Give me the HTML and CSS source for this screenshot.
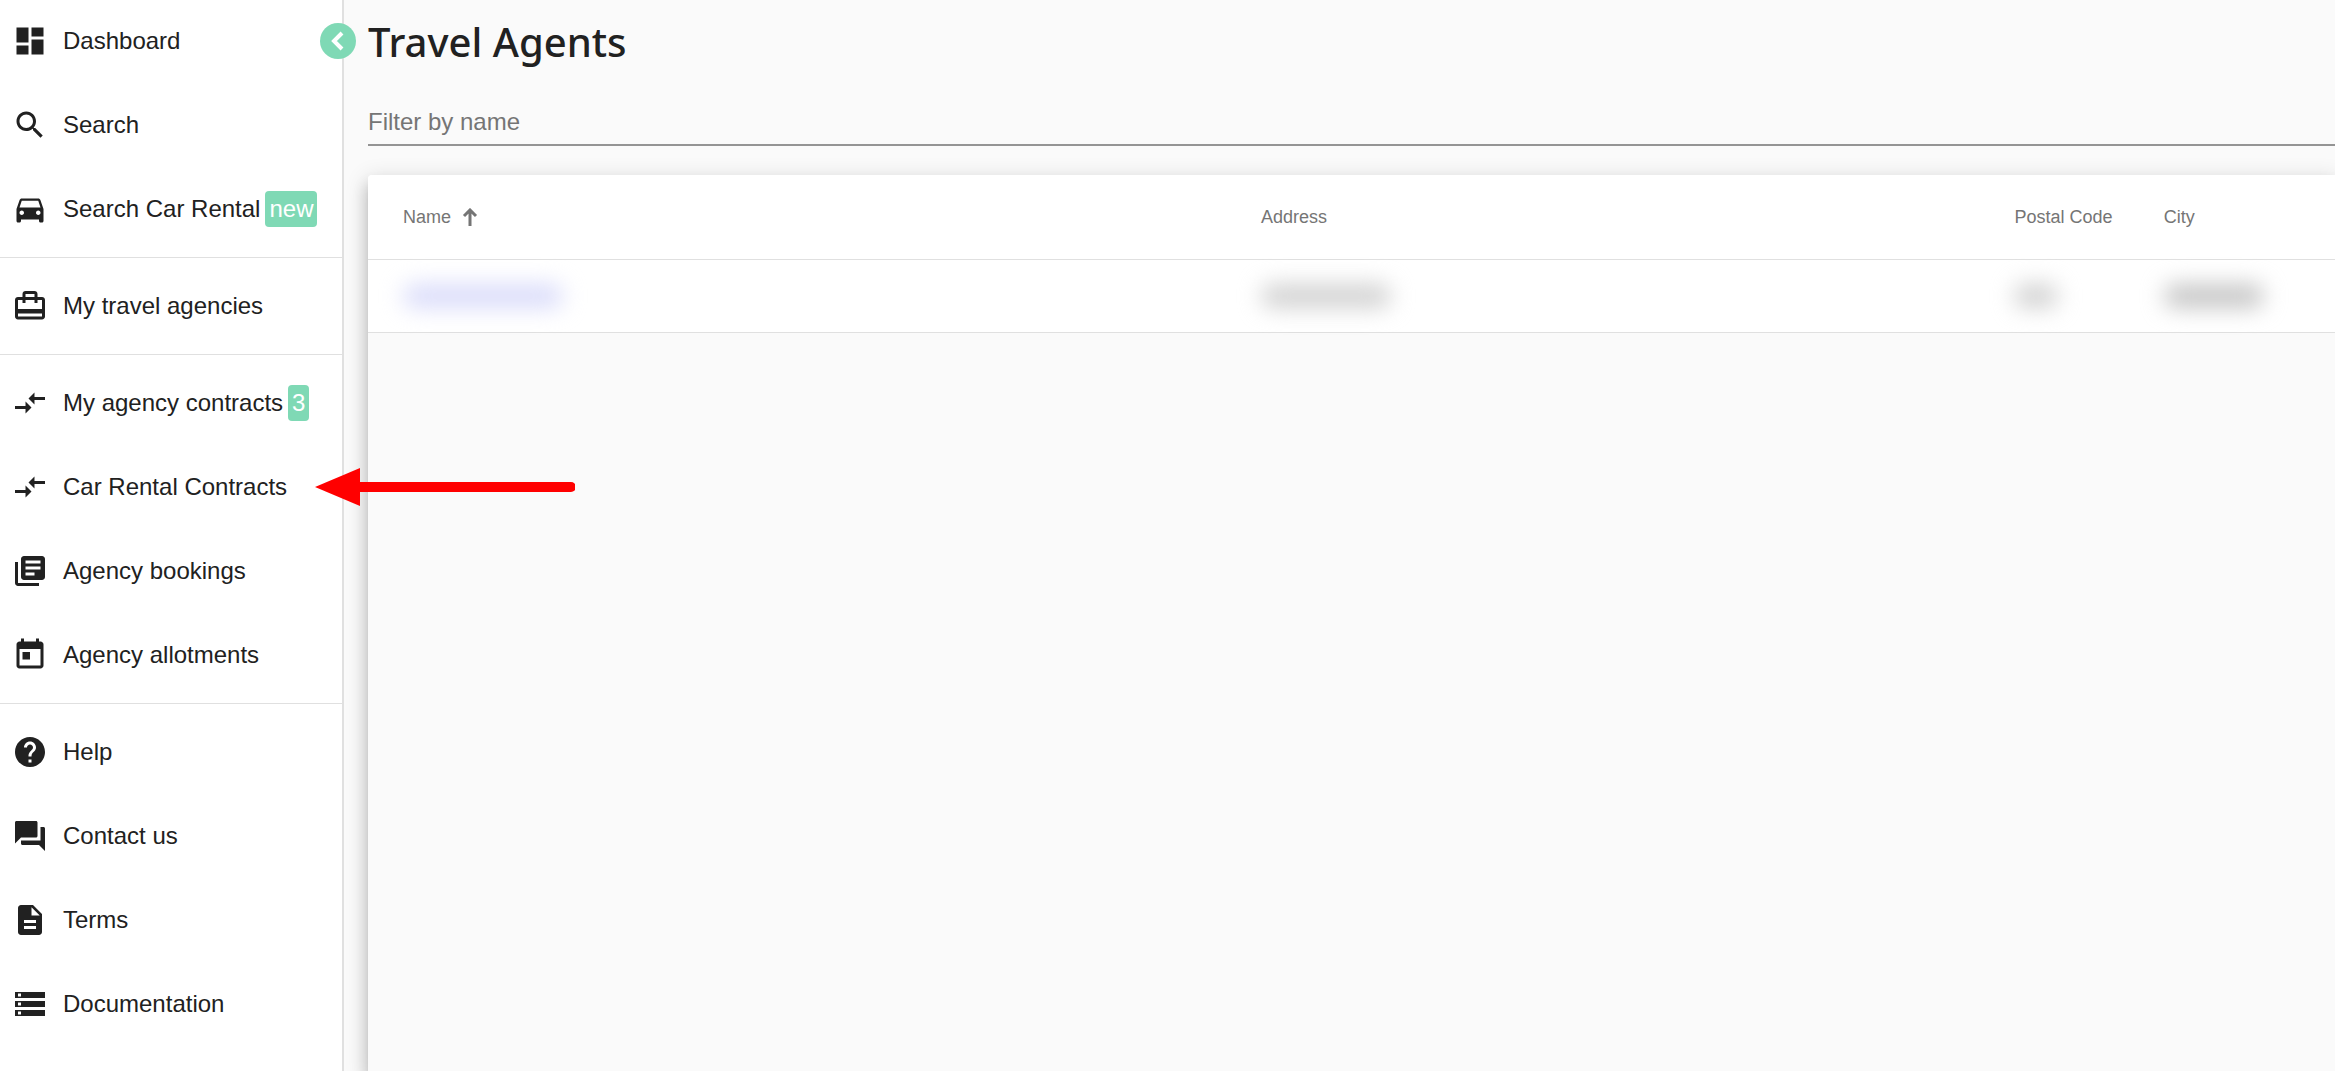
FILE: index.html
```html
<!DOCTYPE html>
<html lang="en">
<head>
  <meta charset="UTF-8" />
  <meta name="viewport" content="width=device-width, initial-scale=1.0"/>
  <title>Travel Agents</title>
  <link rel="stylesheet" href="styles.css">
</head>
<body>

<div class="layout">
  <aside class="sidebar">
    <nav>
      <ul class="nav-group">
        <li><a href="#" class="nav-item">
          <svg class="icon" viewBox="0 0 24 24"><path d="M3 13h8V3H3v10zm0 8h8v-6H3v6zm10 0h8V11h-8v10zm0-18v6h8V3h-8z"/></svg>
          <span>Dashboard</span></a></li>
        <li><a href="#" class="nav-item">
          <svg class="icon" viewBox="0 0 24 24"><path d="M15.5 14h-.79l-.28-.27C15.41 12.59 16 11.11 16 9.5 16 5.91 13.09 3 9.5 3S3 5.91 3 9.5 5.91 16 9.5 16c1.61 0 3.09-.59 4.23-1.57l.27.28v.79l5 4.99L20.49 19l-4.99-5zm-6 0C7.01 14 5 11.99 5 9.5S7.01 5 9.5 5 14 7.01 14 9.5 11.99 14 9.5 14z"/></svg>
          <span>Search</span></a></li>
        <li><a href="#" class="nav-item">
          <svg class="icon" viewBox="0 0 24 24"><path d="M18.92 6.01C18.72 5.42 18.16 5 17.5 5h-11c-.66 0-1.21.42-1.42 1.01L3 12v8c0 .55.45 1 1 1h1c.55 0 1-.45 1-1v-1h12v1c0 .55.45 1 1 1h1c.55 0 1-.45 1-1v-8l-2.08-5.99zM6.5 16c-.83 0-1.5-.67-1.5-1.5S5.67 13 6.5 13s1.5.67 1.5 1.5S7.33 16 6.5 16zm11 0c-.83 0-1.5-.67-1.5-1.5s.67-1.5 1.5-1.5 1.5.67 1.5 1.5-.67 1.5-1.5 1.5zM5 11l1.5-4.5h11L19 11H5z"/></svg>
          <span>Search Car Rental<span class="badge">new</span></span></a></li>
      </ul>
      <ul class="nav-group">
        <li><a href="#" class="nav-item">
          <svg class="icon" viewBox="0 0 24 24"><path d="M20 6h-3V4c0-1.11-.89-2-2-2H9c-1.11 0-2 .89-2 2v2H4c-1.11 0-2 .89-2 2v11c0 1.11.89 2 2 2h16c1.11 0 2-.89 2-2V8c0-1.11-.89-2-2-2zM9 4h6v2H9V4zm11 15H4v-2h16v2zm0-5H4V8h3v2h2V8h6v2h2V8h3v6z"/></svg>
          <span>My travel agencies</span></a></li>
      </ul>
      <ul class="nav-group">
        <li><a href="#" class="nav-item">
          <svg class="icon" viewBox="0 0 24 24"><path d="M9.01 14H2v2h7.01v3L13 15l-3.99-4v3zm5.98-1v-3H22V8h-7.01V5L11 9l3.99 4z"/></svg>
          <span>My agency contracts<span class="badge">3</span></span></a></li>
        <li class="pointed"><a href="#" class="nav-item">
          <svg class="icon" viewBox="0 0 24 24"><path d="M9.01 14H2v2h7.01v3L13 15l-3.99-4v3zm5.98-1v-3H22V8h-7.01V5L11 9l3.99 4z"/></svg>
          <span>Car Rental Contracts</span></a>
          <svg class="pointer" viewBox="0 0 260 38"><path d="M0 19L45 0v38z"/><path class="shaft" d="M40 19h216"/></svg></li>
        <li><a href="#" class="nav-item">
          <svg class="icon" viewBox="0 0 24 24"><path d="M4 6H2v14c0 1.1.9 2 2 2h14v-2H4V6zm16-4H8c-1.1 0-2 .9-2 2v12c0 1.1.9 2 2 2h12c1.1 0 2-.9 2-2V4c0-1.1-.9-2-2-2zm-1 9H9V9h10v2zm-4 4H9v-2h6v2zm4-8H9V5h10v2z"/></svg>
          <span>Agency bookings</span></a></li>
        <li><a href="#" class="nav-item">
          <svg class="icon" viewBox="0 0 24 24"><path d="M19 3h-1V1h-2v2H8V1H6v2H5c-1.11 0-1.99.9-1.99 2L3 19c0 1.1.89 2 2 2h14c1.1 0 2-.9 2-2V5c0-1.1-.9-2-2-2zm0 16H5V8h14v11zM7 10h5v5H7z"/></svg>
          <span>Agency allotments</span></a></li>
      </ul>
      <ul class="nav-group">
        <li><a href="#" class="nav-item">
          <svg class="icon" viewBox="0 0 24 24"><path d="M12 2C6.48 2 2 6.48 2 12s4.48 10 10 10 10-4.48 10-10S17.52 2 12 2zm1 17h-2v-2h2v2zm2.07-7.75l-.9.92C13.45 12.9 13 13.5 13 15h-2v-.5c0-1.1.45-2.1 1.17-2.83l1.24-1.26c.37-.36.59-.86.59-1.41 0-1.1-.9-2-2-2s-2 .9-2 2H8c0-2.21 1.79-4 4-4s4 1.79 4 4c0 .88-.36 1.68-.93 2.25z"/></svg>
          <span>Help</span></a></li>
        <li><a href="#" class="nav-item">
          <svg class="icon" viewBox="0 0 24 24"><path d="M21 6h-2v9H6v2c0 .55.45 1 1 1h11l4 4V7c0-.55-.45-1-1-1zm-4 6V3c0-.55-.45-1-1-1H3c-.55 0-1 .45-1 1v14l4-4h10c.55 0 1-.45 1-1z"/></svg>
          <span>Contact us</span></a></li>
        <li><a href="#" class="nav-item">
          <svg class="icon" viewBox="0 0 24 24"><path d="M14 2H6c-1.1 0-1.99.9-1.99 2L4 20c0 1.1.89 2 1.99 2H18c1.1 0 2-.9 2-2V8l-6-6zm2 16H8v-2h8v2zm0-4H8v-2h8v2zm-3-5V3.5L18.5 9H13z"/></svg>
          <span>Terms</span></a></li>
        <li><a href="#" class="nav-item">
          <svg class="icon" viewBox="0 0 24 24"><path d="M2 20h20v-4H2v4zm2-3h2v2H4v-2zM2 4v4h20V4H2zm4 3H4V5h2v2zm-4 7h20v-4H2v4zm2-3h2v2H4v-2z"/></svg>
          <span>Documentation</span></a></li>
      </ul>
    </nav>
    <button type="button" class="toggle" aria-label="Collapse menu">
      <svg viewBox="0 0 36 36"><path d="M22 10l-8 8 8 8"/></svg>
    </button>
  </aside>

  <main class="content">
    <h1>Travel Agents</h1>
    <input type="text" class="filter" placeholder="Filter by name" aria-label="Filter by name">

    <div class="card">
      <table>
        <thead>
          <tr>
            <th class="col-name"><button type="button" class="sort">Name
              <svg viewBox="0 0 16 18"><path d="M8 18V2M2 8l6-6 6 6"/></svg></button></th>
            <th class="col-address">Address</th>
            <th class="col-postal">Postal Code</th>
            <th>City</th>
          </tr>
        </thead>
        <tbody>
          <tr>
            <td><span class="masked masked-name"></span></td>
            <td><span class="masked masked-address"></span></td>
            <td><span class="masked masked-postal"></span></td>
            <td><span class="masked masked-city"></span></td>
          </tr>
        </tbody>
      </table>
    </div>
  </main>
</div>

</body>
</html>
```
FILE: styles.css
```css
* {
  box-sizing: border-box;
}

body {
  font-family: Arial, "Liberation Sans", sans-serif;
  margin: 0;
  background: #fafafa;
  color: #212121;
}

.layout {
  display: flex;
  height: 100vh;
  overflow: hidden;
}

/* Sidebar */
.sidebar {
  position: relative;
  z-index: 1;
  flex: 0 0 344px;
  background: white;
  border-right: 2px solid #e0e0e0;
}

.nav-group {
  list-style: none;
  margin: 0;
  padding: 6px 0;
  border-bottom: 1px solid #e0e0e0;
}

.nav-group:first-child {
  margin-top: -1px;
  padding-top: 0;
}

.nav-group:last-child {
  border-bottom: none;
}

.nav-item {
  display: flex;
  align-items: center;
  gap: 15px;
  height: 84px;
  padding: 0 12px;
  font-size: 24px;
  line-height: 36px;
  white-space: nowrap;
  color: inherit;
  text-decoration: none;
}

.icon {
  flex: none;
  width: 36px;
  height: 36px;
  fill: #212121;
}

.badge {
  display: inline-block;
  vertical-align: top;
  margin-left: 5px;
  padding: 0 4px;
  border-radius: 4px;
  background: #7fd9b5;
  color: white;
}

.toggle {
  position: absolute;
  top: 23px;
  right: -14px;
  width: 36px;
  height: 36px;
  padding: 0;
  border: none;
  border-radius: 50%;
  background: #7fd9b5;
  cursor: pointer;
}

.toggle svg {
  display: block;
  fill: none;
  stroke: white;
  stroke-width: 4;
}

.pointed {
  position: relative;
}

.pointer {
  position: absolute;
  top: 23px;
  left: 315px;
  width: 260px;
  height: 38px;
  fill: red;
  pointer-events: none;
}

.pointer .shaft {
  stroke: red;
  stroke-width: 10;
  stroke-linecap: round;
}

/* Content */
.content {
  flex: 1;
  display: flex;
  flex-direction: column;
  min-width: 0;
  padding-left: 24px;
}

h1 {
  margin: 12px 0 24px;
  font-family: "Segoe UI", "Noto Sans", sans-serif;
  font-size: 40px;
  font-weight: 500;
  line-height: 60px;
}

.filter {
  width: 100%;
  height: 50px;
  padding: 4px 0 0;
  border: none;
  border-bottom: 2px solid #949494;
  border-radius: 0;
  background: transparent;
  font-family: inherit;
  font-size: 24px;
  outline: none;
}

.filter::placeholder {
  color: #757575;
}

.card {
  flex: 1;
  margin-top: 29px;
  border-radius: 4px 0 0 0;
  box-shadow: 0 8px 8px -5px rgba(0,0,0,0.2), 0 12px 15px 2px rgba(0,0,0,0.14), 0 5px 21px 3px rgba(0,0,0,0.12);
}

table {
  width: 100%;
  table-layout: fixed;
  border-collapse: separate;
  border-spacing: 0;
  border-radius: 4px 0 0 0;
  background: white;
}

th, td {
  padding: 0;
  border-bottom: 1px solid #e0e0e0;
  text-align: left;
}

th:first-child, td:first-child {
  padding-left: 35px;
}

th {
  height: 85px;
  font-size: 18px;
  font-weight: normal;
  color: #757575;
}

td {
  height: 73px;
}

.col-name {
  width: 45.4%;
}

.col-address {
  width: 38.3%;
}

.col-postal {
  width: 7.6%;
}

.sort {
  display: flex;
  align-items: center;
  gap: 11px;
  padding: 0;
  border: none;
  background: none;
  font: inherit;
  color: inherit;
  cursor: pointer;
}

.sort svg {
  width: 16px;
  height: 18px;
  fill: none;
  stroke: #757575;
  stroke-width: 3;
}

.masked {
  display: block;
  height: 24px;
  border-radius: 12px;
  background: #d2d2d2;
  filter: blur(11px);
}

.masked-name {
  width: 160px;
  background: #dadcfa;
}

.masked-address {
  width: 130px;
}

.masked-postal {
  width: 44px;
}

.masked-city {
  width: 100px;
  background: #c6c6c6;
}
```
